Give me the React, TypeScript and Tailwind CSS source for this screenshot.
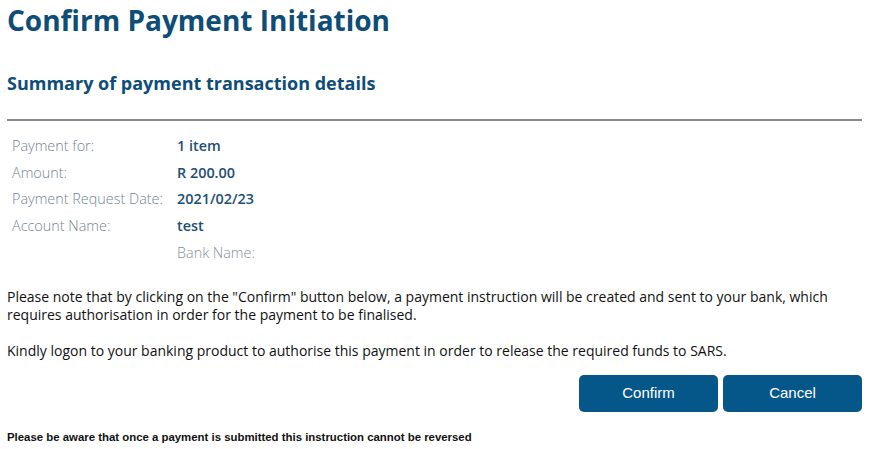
import React from 'react'

const rows: [string, string][] = [
  ['Payment for:', '1 item'],
  ['Amount:', 'R 200.00'],
  ['Payment Request Date:', '2021/02/23'],
  ['Account Name:', 'test'],
]

export default function App() {
  return (
    <div className="w-[869px] h-[449px] bg-white overflow-hidden px-[7px] font-['Open_Sans',sans-serif]">
      <h1 className="pt-[2px] text-[28px] leading-[36px] font-bold text-[#0d4d78]">
        Confirm Payment Initiation
      </h1>
      <h2 className="mt-[33px] text-[18px] leading-[24px] font-bold text-[#0d4d78]">
        Summary of payment transaction details
      </h2>
      <div className="mt-[24px] h-[2px] bg-[#8a8a8a]" />

      <div className="mt-[12px] pl-[5px] text-[14.4px] leading-[26.5px]">
        {rows.map(([label, value]) => (
          <div key={label} className="flex">
            <span className="w-[165px] font-light text-[#76858f]">{label}</span>
            <span className="font-semibold text-[#1e4f74]">{value}</span>
          </div>
        ))}
        <div className="flex pt-[1px]">
          <span className="w-[165px]" />
          <span className="font-light text-[#84919b]">Bank Name:</span>
        </div>
      </div>

      <p className="mt-[21px] text-[14px] leading-[18px] text-[#111]">
        Please note that by clicking on the "Confirm" button below, a payment instruction will be created and sent to your bank, which requires authorisation in order for the payment to be finalised.
      </p>
      <p className="mt-[18px] text-[14px] leading-[18px] text-[#111]">
        Kindly logon to your banking product to authorise this payment in order to release the required funds to SARS.
      </p>

      <div className="mt-[15px] flex justify-end gap-[5px]">
        <button className="w-[139px] h-[37px] rounded-[5px] bg-[#05578a] text-white text-[15px] font-['Liberation_Sans',sans-serif]">
          Confirm
        </button>
        <button className="w-[139px] h-[37px] rounded-[5px] bg-[#05578a] text-white text-[15px] font-['Liberation_Sans',sans-serif]">
          Cancel
        </button>
      </div>

      <p className="mt-[18px] text-[11.4px] leading-[14px] font-bold text-[#111] font-['Liberation_Sans',sans-serif]">
        Please be aware that once a payment is submitted this instruction cannot be reversed
      </p>
    </div>
  )
}
